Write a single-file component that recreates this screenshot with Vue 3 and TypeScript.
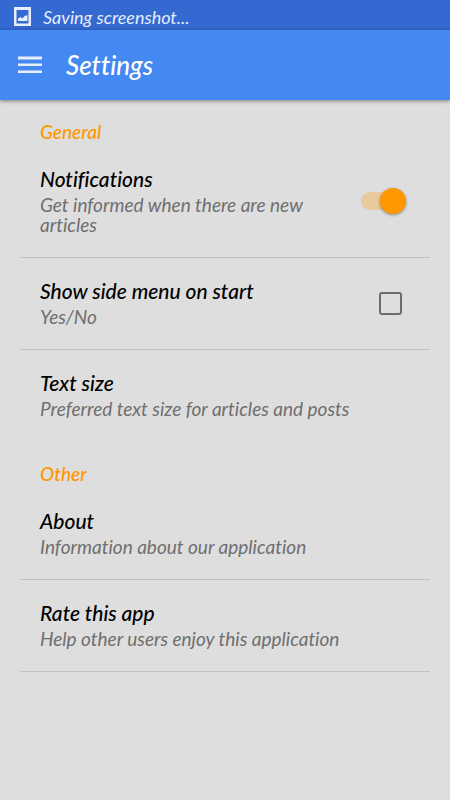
<script setup lang="ts">
import { ref } from 'vue'

const notifications = ref<boolean>(true)
const sideMenu = ref<boolean>(false)
</script>

<template>
  <div class="screen">
    <div class="status" role="status">
      <svg class="status-icon" viewBox="0 0 18 20" aria-hidden="true">
        <path fill="#e6edfb" fill-rule="evenodd" d="M0 0h17v19H0zM2.500 3v13.500h12V3z" />
        <path fill="#e6edfb" d="M4 14v-2.500l2.500-1.500 2 1.500 2.500-3 1 .5 1.500-1.500V14z" />
      </svg>
      <span>Saving screenshot...</span>
    </div>
    <header class="toolbar">
      <button class="menu" type="button" aria-label="Menu">
        <svg viewBox="0 0 24 18" aria-hidden="true">
          <path fill="#e8f0fe" d="M0 .5h24v3H0zM0 7.500h24v2.500H0zM0 14.500h24v2.500H0z" />
        </svg>
      </button>
      <h1>Settings</h1>
    </header>
    <main>
      <section>
        <h2>General</h2>
        <label class="row">
          <span class="text">
            <span class="title">Notifications</span>
            <span class="desc">Get informed when there are new articles</span>
          </span>
          <input v-model="notifications" class="switch" type="checkbox" role="switch" />
        </label>
        <label class="row">
          <span class="text">
            <span class="title">Show side menu on start</span>
            <span class="desc">Yes/No</span>
          </span>
          <input v-model="sideMenu" class="check" type="checkbox" />
        </label>
        <button class="row last" type="button">
          <span class="text">
            <span class="title">Text size</span>
            <span class="desc">Preferred text size for articles and posts</span>
          </span>
        </button>
      </section>
      <section>
        <h2>Other</h2>
        <button class="row" type="button">
          <span class="text">
            <span class="title">About</span>
            <span class="desc">Information about our application</span>
          </span>
        </button>
        <button class="row" type="button">
          <span class="text">
            <span class="title">Rate this app</span>
            <span class="desc">Help other users enjoy this application</span>
          </span>
        </button>
      </section>
    </main>
  </div>
</template>

<style>
body {
  margin: 0;
  background: #dedede;
}
</style>

<style scoped>
.screen {
  min-height: 100vh;
  background: #dedede;
  color: #000;
  font-family: 'Choco cooky', Lato, sans-serif;
  font-style: italic;
  font-variant-ligatures: none;
}
.status {
  display: flex;
  align-items: center;
  gap: 11px;
  height: 30px;
  padding: 4px 14px 0;
  box-sizing: border-box;
  background: #3469d2;
  color: #e6edfb;
  font-size: 18px;
  line-height: 24px;
}
.status-icon {
  width: 18px;
  height: 20px;
}
.toolbar {
  display: flex;
  align-items: center;
  gap: 24px;
  height: 70px;
  padding: 0 18px;
  background: #4488f2;
  box-shadow: 0 1px 4px rgba(0, 0, 0, 0.45);
}
.menu {
  display: flex;
  padding: 0;
  border: 0;
  background: none;
}
.menu svg {
  width: 24px;
  height: 18px;
}
h1 {
  margin: 0;
  color: #fff;
  font-size: 26px;
  font-weight: 500;
  line-height: 32px;
}
main {
  padding: 0 20px;
}
h2 {
  margin: 0;
  padding: 22px 20px 4px;
  color: #ff9800;
  font-size: 19px;
  font-weight: 500;
  line-height: 20px;
}
.row {
  display: flex;
  align-items: center;
  justify-content: space-between;
  gap: 20px;
  width: 100%;
  padding: 21px 24px 22px 20px;
  box-sizing: border-box;
  border: 0;
  border-bottom: 1px solid #c3c3c3;
  background: none;
  color: inherit;
  font: inherit;
  font-variant-ligatures: none;
  text-align: left;
}
.row.last {
  border-bottom-color: transparent;
}
.text {
  display: flex;
  flex-direction: column;
  gap: 4px;
}
.title {
  font-size: 21px;
  font-weight: 500;
  line-height: 24px;
}
.desc {
  color: #6f6f6f;
  font-size: 19px;
  line-height: 20px;
}
.switch,
.check {
  appearance: none;
  flex: none;
  margin: 0;
  box-sizing: border-box;
}
.switch {
  display: flex;
  align-items: center;
  width: 45px;
  height: 18px;
  border-radius: 9px;
  background: #bdbdbd;
}
.switch::before {
  content: '';
  width: 26px;
  height: 26px;
  flex: none;
  border-radius: 50%;
  background: #f1f1f1;
  box-shadow: 0 1px 3px rgba(0, 0, 0, 0.4);
}
.switch:checked {
  justify-content: flex-end;
  background: #e8ca9c;
}
.switch:checked::before {
  background: #ff9800;
}
.check {
  width: 23px;
  height: 23px;
  margin-right: 4px;
  border: 2px solid #6c6c6c;
  border-radius: 3px;
}
.check:checked {
  border-color: #ff9800;
  background: #ff9800;
}
</style>
